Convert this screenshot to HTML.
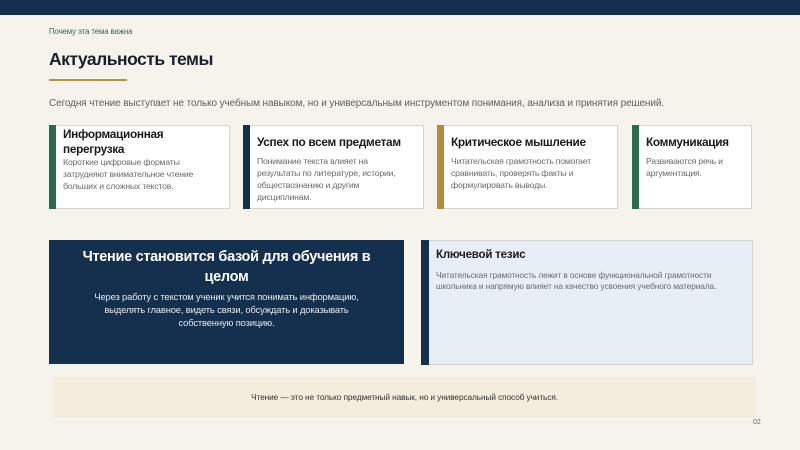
<!DOCTYPE html>
<html><head><meta charset="utf-8"><style>
*{margin:0;padding:0;box-sizing:border-box}
body{width:800px;height:450px;background:#f6f3ed;font-family:"Liberation Sans","DejaVu Sans",sans-serif;position:relative;overflow:hidden}
.a{position:absolute}
.card{position:absolute;top:125px;height:84px;background:#fff;border:1px solid #d9d5c9;border-left:none}
.card .bar{position:absolute;left:0;top:-1px;bottom:-1px;width:7px}
.card h3{position:absolute;left:14px;top:9px;font-size:11.8px;line-height:15px;color:#1a1a1a;font-weight:bold;letter-spacing:-0.3px}
.card p{position:absolute;left:14px;font-size:8.7px;line-height:12px;color:#6b6b6b;letter-spacing:-0.2px;white-space:nowrap}
</style></head><body>
<div class="a" style="left:0;top:0;width:800px;height:15px;background:#152f4e"></div>
<div class="a" style="left:49px;top:27px;font-size:7.8px;color:#2e6b4c;letter-spacing:-0.1px">Почему эта тема важна</div>
<div class="a" style="left:49px;top:49px;font-size:17.5px;font-weight:bold;color:#1a1f2b;letter-spacing:-0.5px">Актуальность темы</div>
<div class="a" style="left:49px;top:79px;width:78px;height:2px;background:#b9923f"></div>
<div class="a" style="left:49px;top:98px;font-size:10px;color:#5f5f5f;letter-spacing:-0.1px">Сегодня чтение выступает не только учебным навыком, но и универсальным инструментом понимания, анализа и принятия решений.</div>

<div class="card" style="left:49px;width:181px"><div class="bar" style="background:#2e6a4e"></div>
<h3 style="top:1px">Информационная<br>перегрузка</h3><p style="top:30px">Короткие цифровые форматы<br>затрудняют внимательное чтение<br>больших и сложных текстов.</p></div>
<div class="card" style="left:243px;width:181px"><div class="bar" style="background:#152f4e"></div>
<h3>Успех по всем предметам</h3><p style="top:29px">Понимание текста влияет на<br>результаты по литературе, истории,<br>обществознанию и другим<br>дисциплинам.</p></div>
<div class="card" style="left:437px;width:181px"><div class="bar" style="background:#b48a3d"></div>
<h3>Критическое мышление</h3><p style="top:29px">Читательская грамотность помогает<br>сравнивать, проверять факты и<br>формулировать выводы.</p></div>
<div class="card" style="left:632px;width:120px"><div class="bar" style="background:#2e6a4e"></div>
<h3>Коммуникация</h3><p style="top:29px">Развиваются речь и<br>аргументация.</p></div>

<div class="a" style="left:49px;top:240px;width:355px;height:124px;background:#152f4e;color:#fff;text-align:center">
<div style="margin-top:7px;font-size:14.5px;font-weight:bold;line-height:20px;letter-spacing:-0.3px;padding:0 20px">Чтение становится базой для обучения в<br>целом</div>
<div style="font-size:9.4px;line-height:13px;color:#e6e9ee;margin-top:3px;letter-spacing:-0.15px">Через работу с текстом ученик учится понимать информацию,<br>выделять главное, видеть связи, обсуждать и доказывать<br>собственную позицию.</div></div>

<div class="a" style="left:421px;top:240px;width:332px;height:125px;background:#e8eef6;border:1px solid #d3d3d3;border-left:none">
<div class="a" style="left:0;top:-1px;bottom:-1px;width:8px;background:#152f4e"></div>
<div class="a" style="left:15px;top:8px;font-size:11.5px;font-weight:bold;color:#1a1a1a;letter-spacing:-0.2px">Ключевой тезис</div>
<div class="a" style="left:15px;top:29px;font-size:8.3px;line-height:11px;color:#6b6b6b;letter-spacing:-0.1px;white-space:nowrap">Читательская грамотность лежит в основе функциональной грамотности<br>школьника и напрямую влияет на качество усвоения учебного материала.</div></div>

<div class="a" style="left:53px;top:377px;width:703px;height:41px;background:#f4ecdc;text-align:center;font-size:8.3px;line-height:41px;color:#333;letter-spacing:-0.1px">Чтение — это не только предметный навык, но и универсальный способ учиться.</div>
<div class="a" style="left:753px;top:419px;font-size:7px;color:#666">02</div>
</body></html>
